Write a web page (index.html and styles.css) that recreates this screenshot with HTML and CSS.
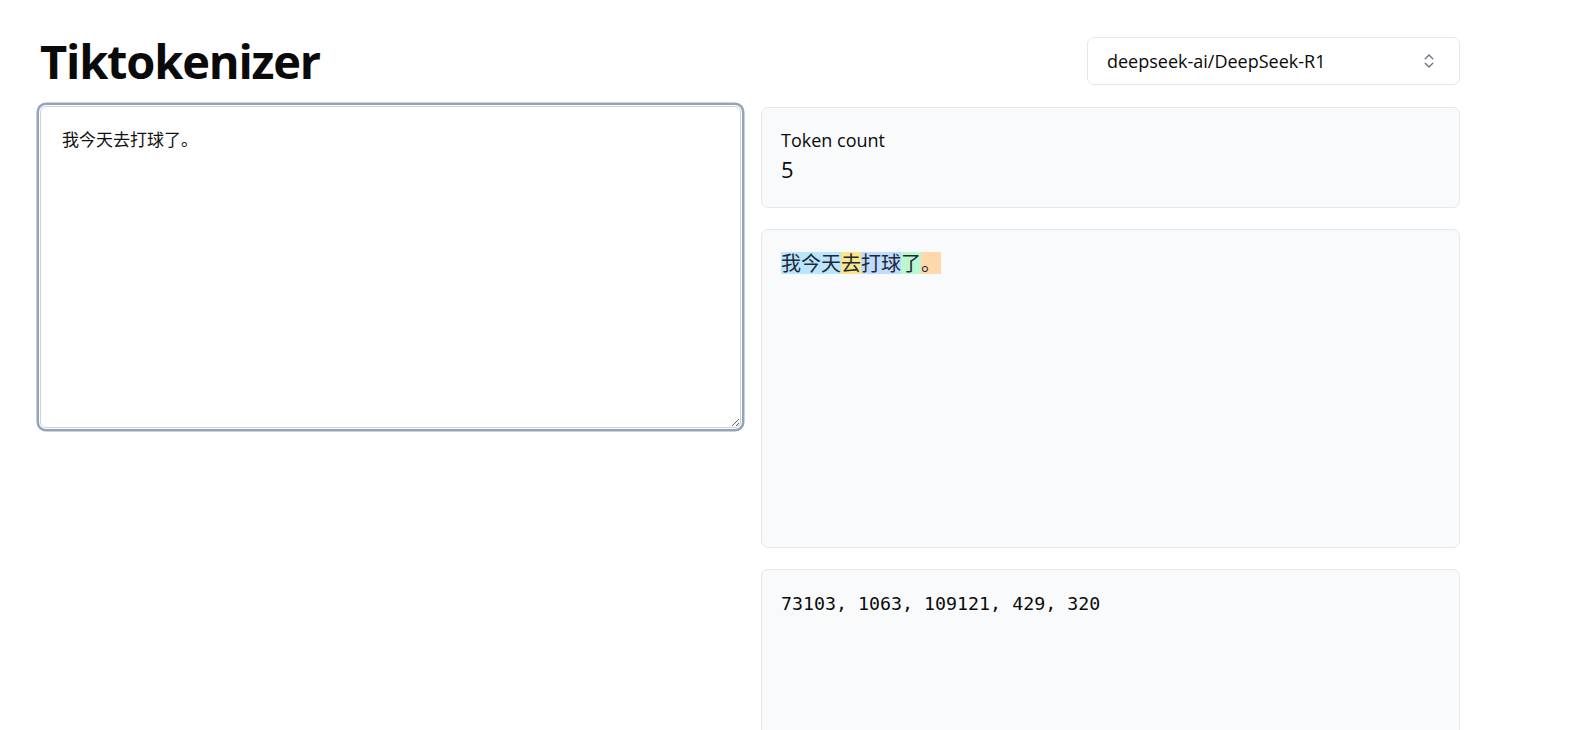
FILE: index.html
```html
<!DOCTYPE html>
<html lang="zh">
<head>
<meta charset="utf-8">
<title>Tiktokenizer</title>
<link rel="stylesheet" href="styles.css">
</head>
<body>
<main class="page">
  <header class="header">
    <h1 class="title">Tiktokenizer</h1>
    <div class="select">
      <span class="select-label">deepseek-ai/DeepSeek-R1</span>
      <svg class="chev" width="18" height="18" viewBox="0 0 24 24" fill="none" stroke="currentColor" stroke-width="1.8" stroke-linecap="round" stroke-linejoin="round"><path d="m7 15 5 5 5-5"/><path d="m7 9 5-5 5 5"/></svg>
    </div>
  </header>
  <section class="grid">
    <div class="left">
      <textarea class="input">我今天去打球了。</textarea>
    </div>
    <div class="right">
      <div class="card count-card">
        <div class="count-label">Token count</div>
        <div class="count-value">5</div>
      </div>
      <div class="card tokens-card">
        <span class="tok t1">我今天</span><span class="tok t2">去</span><span class="tok t3">打球</span><span class="tok t4">了</span><span class="tok t5">。</span>
      </div>
      <div class="card ids-card">73103, 1063, 109121, 429, 320</div>
    </div>
  </section>
</main>
</body>
</html>
```
FILE: styles.css
```css
html, body {
  margin: 0;
  padding: 0;
  background: #ffffff;
  color: #0a0a0a;
  font-family: "Open Sans", "Noto Sans", "Noto Sans CJK SC", sans-serif;
  overflow: hidden;
}
.page {
  width: 1420px;
  margin-left: 40px;
  padding-top: 36px;
}
.header {
  display: flex;
  justify-content: space-between;
  align-items: center;
  height: 50px;
}
.title {
  margin: 0;
  font-size: 47px;
  font-weight: 700;
  letter-spacing: -1.2px;
  line-height: 50px;
}
.select {
  width: 373px;
  height: 48px;
  box-sizing: border-box;
  border: 1px solid #e5e7eb;
  border-radius: 7px;
  display: flex;
  align-items: center;
  justify-content: space-between;
  padding: 0 21px 0 19px;
  font-size: 18px;
}
.chev { color: #6b7280; }
.grid {
  display: grid;
  grid-template-columns: 701px 1fr;
  gap: 20px;
  margin-top: 20px;
}
.input {
  display: block;
  width: 100%;
  height: 322px;
  box-sizing: border-box;
  border: 1px solid #cbd5e1;
  border-radius: 6px;
  padding: 20px 21px;
  font-family: "Noto Sans CJK SC", sans-serif;
  font-size: 17px;
  line-height: 24px;
  color: #111;
  resize: vertical;
  outline: none;
  box-shadow: 0 0 0 1px #ffffff, 0 0 0 3.5px #94a3b8;
}
.right {
  display: flex;
  flex-direction: column;
  gap: 21px;
  padding-top: 1px;
}
.card {
  background: #f9fafb;
  border: 1px solid #e5e7eb;
  border-radius: 7px;
  box-sizing: border-box;
  padding: 20px 19px;
}
.count-card { height: 101px; }
.count-label { font-size: 18px; line-height: 24px; }
.count-value { font-size: 22px; line-height: 34px; }
.tokens-card {
  height: 319px;
  padding-top: 22px;
  font-family: "Noto Sans CJK SC", sans-serif;
  font-size: 20px;
  line-height: 22px;
  color: #1f2937;
}
.tok { display: inline-block; height: 22px; }
.t1 { background: #bae6fd; }
.t2 { background: #fde68a; }
.t3 { background: #bfdbfe; }
.t4 { background: #bbf7d0; }
.t5 { background: #fed7aa; }
.ids-card {
  height: 200px;
  padding-top: 22px;
  font-family: "DejaVu Sans Mono", "Liberation Mono", monospace;
  font-size: 18.3px;
  line-height: 24px;
}
```
